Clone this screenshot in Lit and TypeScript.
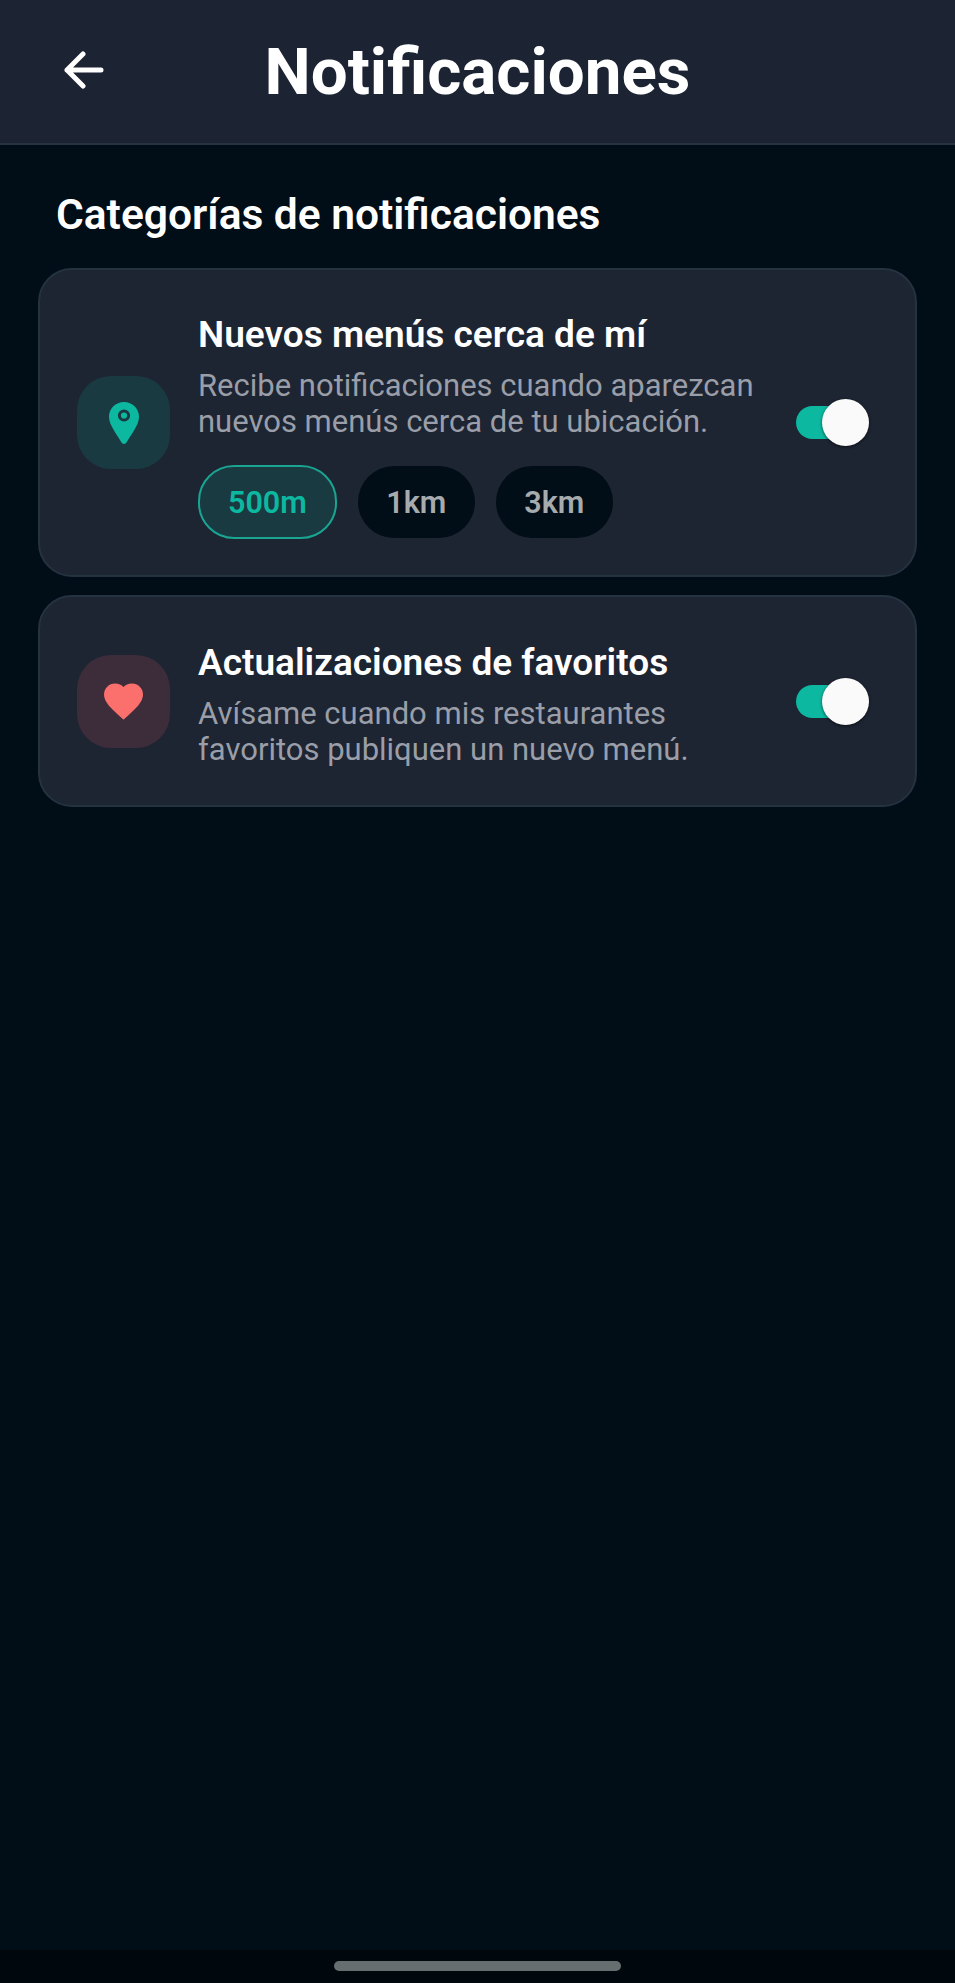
import { LitElement, css, html } from "lit";
import { customElement, state } from "lit/decorators.js";

const arrowIcon = html`<svg width="40" height="38" viewBox="0 0 40 38" fill="none" stroke="#fff" stroke-width="5" stroke-linecap="round" stroke-linejoin="round">
  <path d="M37 19H3M19 3 3 19l16 16" />
</svg>`;

const pinIcon = html`<svg width="30" height="42" viewBox="0 0 30 42">
  <path fill="#0db8a0" d="M15 0C6.7 0 0 6.6 0 14.8c0 4.6 2.3 9.3 5 13.6 2.6 4.1 5.6 8.6 7.4 11.9 1.2 2.2 4 2.2 5.2 0 1.8-3.3 4.8-7.8 7.4-11.9 2.7-4.3 5-9 5-13.6C30 6.6 23.3 0 15 0z" />
  <circle cx="15" cy="13.5" r="4.6" fill="none" stroke="#1a3a42" stroke-width="3" />
</svg>`;

const heartIcon = html`<svg width="39" height="37" viewBox="1.6 2.6 20.8 19.2">
  <path fill="#fb6f6c" stroke="#fb6f6c" stroke-width="0.8" stroke-linejoin="round" d="M12 21.35l-1.45-1.32C5.4 15.36 2 12.28 2 8.5 2 5.42 4.42 3 7.5 3c1.74 0 3.41.81 4.5 2.09C13.09 3.81 14.76 3 16.5 3 19.58 3 22 5.42 22 8.5c0 3.78-3.4 6.86-8.55 11.54L12 21.35z" />
</svg>`;

@customElement("app-root")
export class AppRoot extends LitElement {
  @state()
  private radius = "500m";

  @state()
  private nearby = true;

  @state()
  private favorites = true;

  private toggle(on: boolean, change: () => void) {
    return html`<button class="toggle ${on ? "on" : ""}" @click=${change}>
      <span class="thumb"></span>
    </button>`;
  }

  render() {
    return html`
      <header>
        <button class="back">${arrowIcon}</button>
        <h1>Notificaciones</h1>
      </header>
      <main>
        <h2>Categorías de notificaciones</h2>
        <section class="card">
          <div class="icon teal">${pinIcon}</div>
          <div class="text">
            <h3>Nuevos menús cerca de mí</h3>
            <p>Recibe notificaciones cuando aparezcan<br />nuevos menús cerca de tu ubicación.</p>
            <div class="chips">
              ${["500m", "1km", "3km"].map(
                (r) => html`<button
                  class="chip ${this.radius === r ? "active" : ""}"
                  @click=${() => (this.radius = r)}
                >
                  ${r}
                </button>`
              )}
            </div>
          </div>
          ${this.toggle(this.nearby, () => (this.nearby = !this.nearby))}
        </section>
        <section class="card">
          <div class="icon red">${heartIcon}</div>
          <div class="text">
            <h3>Actualizaciones de favoritos</h3>
            <p>Avísame cuando mis restaurantes<br />favoritos publiquen un nuevo menú.</p>
          </div>
          ${this.toggle(this.favorites, () => (this.favorites = !this.favorites))}
        </section>
      </main>
      <footer><div class="home-bar"></div></footer>
    `;
  }

  static styles = css`
    :host {
      display: flex;
      flex-direction: column;
      width: 955px;
      min-height: 1983px;
      background: #010d17;
      color: #fff;
      font-family: Roboto, "Liberation Sans", sans-serif;
    }

    button {
      border: none;
      padding: 0;
      background: none;
      font: inherit;
      color: inherit;
    }

    header {
      box-sizing: border-box;
      height: 145px;
      display: grid;
      grid-template-columns: 1fr auto 1fr;
      align-items: center;
      background: #1c2333;
      border-bottom: 2px solid #273340;
    }

    .back {
      display: flex;
      justify-self: start;
      margin: 0 0 4px 64px;
    }

    h1 {
      margin: 0;
      font-size: 65.5px;
      line-height: 72px;
      font-weight: 700;
    }

    main {
      flex: 1;
      display: flex;
      flex-direction: column;
      gap: 18px;
      padding: 0 38px;
    }

    h2 {
      margin: 45px 0 10px 18px;
      font-size: 42.5px;
      line-height: 50px;
      font-weight: 600;
    }

    .card {
      box-sizing: border-box;
      min-height: 212px;
      display: flex;
      align-items: center;
      padding: 36px 51px 36px 37px;
      background: #1d2432;
      border: 2px solid #253240;
      border-radius: 34px;
    }

    .icon {
      flex: none;
      display: flex;
      align-items: center;
      justify-content: center;
      width: 93px;
      height: 93px;
      border-radius: 34px;
    }

    .teal {
      background: #1a3a42;
    }

    .red {
      background: #3d2c3a;
    }

    .text {
      flex: 1;
      margin-left: 28px;
      padding-top: 7px;
    }

    h3 {
      margin: 0;
      font-size: 37px;
      line-height: 44px;
      font-weight: 600;
    }

    p {
      margin: 11px 0 0;
      font-size: 31px;
      line-height: 36px;
      color: #9a9ea8;
    }

    .chips {
      display: flex;
      align-items: center;
      gap: 21px;
      margin-top: 25px;
    }

    .chip {
      box-sizing: border-box;
      height: 72px;
      padding: 0 28.5px;
      border-radius: 36px;
      background: #010d17;
      color: #a6abae;
      font-size: 30.5px;
      font-weight: 600;
    }

    .chip.active {
      height: 74px;
      padding: 0 28px;
      background: #1a3a42;
      border: 2px solid #1aa492;
      color: #0db8a0;
    }

    .toggle {
      position: relative;
      flex: none;
      width: 68px;
      height: 33px;
      border-radius: 17px;
      background: #0db8a0;
    }

    .thumb {
      position: absolute;
      top: -7px;
      right: -5px;
      width: 47px;
      height: 47px;
      border-radius: 50%;
      background: #fafafa;
      box-shadow: 0 1px 3px rgba(0, 0, 0, 0.6);
    }

    footer {
      box-sizing: border-box;
      height: 33px;
      padding-top: 11px;
      background: #00070d;
    }

    .home-bar {
      width: 287px;
      height: 10px;
      margin: 0 auto;
      border-radius: 5px;
      background: #666e70;
    }
  `;
}

declare global {
  interface HTMLElementTagNameMap {
    "app-root": AppRoot;
  }
}
